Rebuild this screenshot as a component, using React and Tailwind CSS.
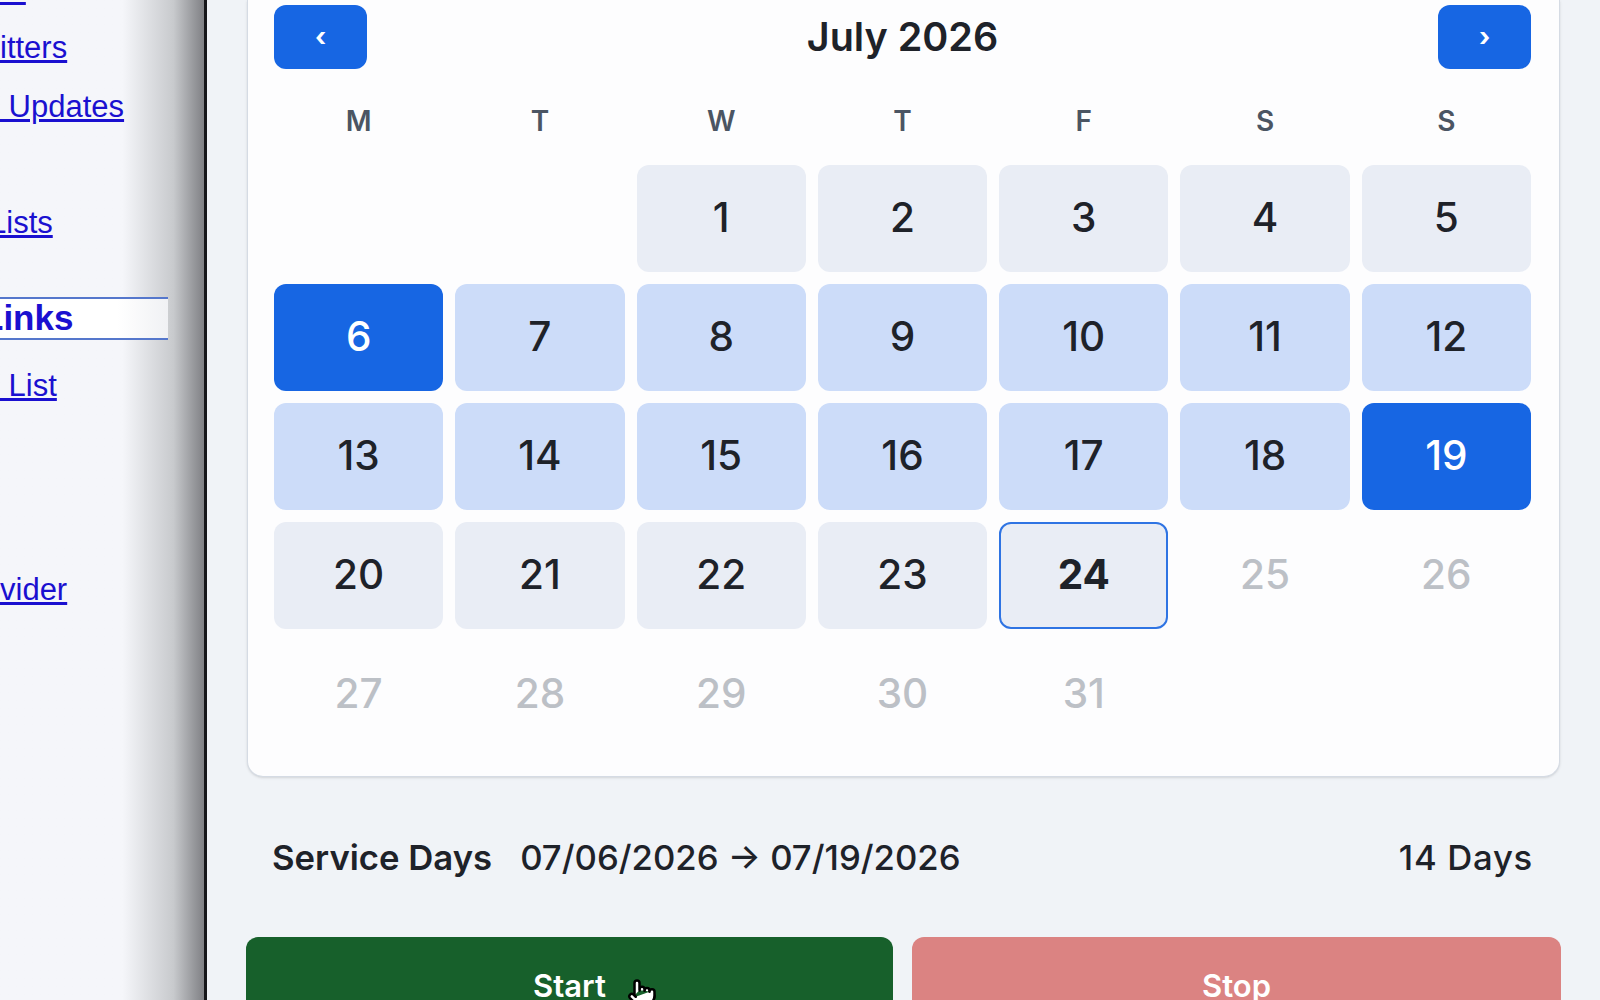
import { Pointer } from 'lucide-react'

const inter = "font-['Inter','Noto_Sans',sans-serif]"

const weeks = [
  [null, null, 1, 2, 3, 4, 5],
  [6, 7, 8, 9, 10, 11, 12],
  [13, 14, 15, 16, 17, 18, 19],
  [20, 21, 22, 23, 24, 25, 26],
  [27, 28, 29, 30, 31, null, null],
]

const weekdays = ['M', 'T', 'W', 'T', 'F', 'S', 'S']

function dayClass(day) {
  if (day === 6 || day === 19) return 'bg-[#1766e3] text-white font-medium'
  if (day === 24) return 'bg-[#e9edf5] text-[#1e2229] font-bold border-2 border-[#2f74e3]'
  if (day > 6 && day < 19) return 'bg-[#ccdcf9] text-[#1e2229] font-medium'
  if (day > 24) return 'text-[#bcc0c6] font-medium'
  return 'bg-[#e9edf5] text-[#1e2229] font-medium'
}

function SideLink({ children, className = '' }) {
  return (
    <a href="#" className={`block h-[34px] whitespace-pre leading-[34px] text-[#1a10d0] underline ${className}`}>
      {children}
    </a>
  )
}

function Sidebar() {
  return (
    <aside className="flex h-full w-[204px] shrink-0 flex-col overflow-hidden bg-gradient-to-r from-[#f5f6fa] from-[60%] via-[#c8cacd] via-[85%] to-[#808185] font-['Liberation_Sans',Arial,sans-serif] text-[31px]">
      <SideLink className="-mt-[27px]">rs</SideLink>
      <SideLink className="mt-[24px]">itters</SideLink>
      <SideLink className="mt-[25px]">{' Updates'}</SideLink>
      <SideLink className="mt-[82px] -ml-[11px]">Lists</SideLink>
      <div className="mt-[57px] w-[168px] border-y-2 border-[#5577cc] bg-gradient-to-r from-white from-[70%] to-[#f0f1f4]">
        <a href="#" className="-ml-[18px] block h-[39px] text-[35px] font-bold leading-[38px] text-[#1a10d0]">Links</a>
      </div>
      <SideLink className="mt-[29px]">{' List'}</SideLink>
      <SideLink className="mt-[170px]">vider</SideLink>
    </aside>
  )
}

function Calendar() {
  return (
    <section className="h-[777px] w-[1313px] shrink-0 rounded-b-2xl border border-t-0 border-[#d5dbe4] bg-[#fdfdfe] pl-[26px] pr-[28px] pt-[5px] shadow-sm">
      <div className="flex h-[64px] items-center justify-between">
        <button className="h-[64px] w-[93px] rounded-xl bg-[#1766e3] text-[26px] font-bold leading-none text-white">‹</button>
        <h2 className="mt-[2px] text-[39.5px] font-semibold text-[#1e2229]">July 2026</h2>
        <button className="h-[64px] w-[93px] rounded-xl bg-[#1766e3] text-[26px] font-bold leading-none text-white">›</button>
      </div>
      <div className="mt-[32px] grid h-[40px] grid-cols-7 gap-x-[12px] text-center text-[28px] font-semibold leading-[40px] text-[#4b5563]">
        {weekdays.map((d, i) => (
          <div key={i}>{d}</div>
        ))}
      </div>
      <div className="mt-[24px] grid auto-rows-[107px] grid-cols-7 gap-x-[12px] gap-y-[12px]">
        {weeks.flat().map((day, i) =>
          day ? (
            <div key={i} className={`flex items-center justify-center rounded-xl text-[40.5px] ${dayClass(day)}`}>
              {day}
            </div>
          ) : (
            <div key={i} />
          )
        )}
      </div>
    </section>
  )
}

export default function App() {
  return (
    <div className={`flex h-[1000px] w-[1600px] overflow-hidden bg-[#f0f3f7] ${inter}`}>
      <Sidebar />
      <div className="w-[3px] shrink-0 bg-[#16171a]" />
      <main className="relative flex-1 pl-[40px]">
        <Calendar />
        <div className="mt-[60px] flex h-[40px] w-[1313px] items-center justify-between pl-[25px] pr-[27px] text-[34.7px] font-medium text-[#1e2229]">
          <div className="flex items-center gap-[28px]">
            <span className="font-semibold">Service Days</span>
            <span>07/06/2026 → 07/19/2026</span>
          </div>
          <span className="tracking-[0.7px]">14 Days</span>
        </div>
        <div className="-ml-[1px] mt-[60px] flex w-[1315px] gap-[19px]">
          <button className="flex h-[100px] w-[647px] shrink-0 justify-center rounded-t-xl bg-[#17602b] pt-[25px] text-[31px] font-semibold leading-[48px] text-white">Start</button>
          <button className="flex h-[100px] flex-1 justify-center rounded-t-xl bg-[#db8382] pt-[25px] text-[31px] font-semibold leading-[48px] text-white">Stop</button>
        </div>
        <Pointer className="absolute left-[420px] top-[978px] h-[30px] w-[30px] fill-white stroke-black" strokeWidth={2} />
      </main>
    </div>
  )
}
